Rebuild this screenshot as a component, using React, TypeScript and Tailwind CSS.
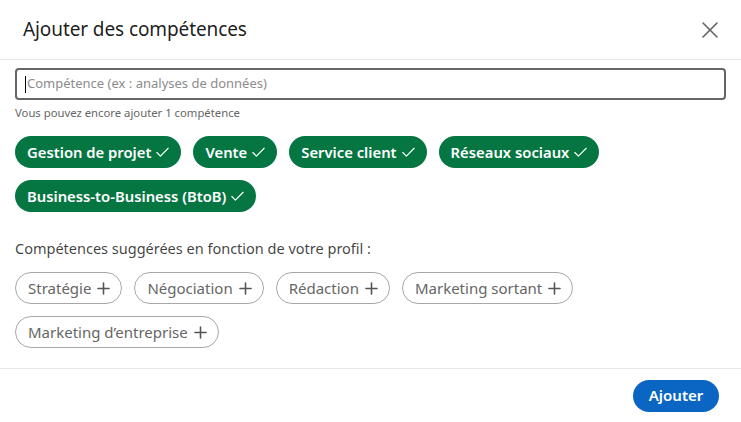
import { Check, Plus, X } from "lucide-react";

const added = [
  "Gestion de projet",
  "Vente",
  "Service client",
  "Réseaux sociaux",
  "Business-to-Business (BtoB)",
];

const suggested = [
  "Stratégie",
  "Négociation",
  "Rédaction",
  "Marketing sortant",
  "Marketing d’entreprise",
];

export default function App() {
  return (
    <div
      className="w-[741px] h-[422px] bg-white flex flex-col text-[rgba(0,0,0,0.9)]"
      style={{ fontFamily: '"Noto Sans", "Open Sans", sans-serif' }}
    >
      {/* en-tête */}
      <div className="h-[60px] flex items-center justify-between pl-[23px] pr-[17px] border-b border-[#e8e8e8] shrink-0">
        <h2 className="text-[19px] font-normal tracking-[-0.1px]">Ajouter des compétences</h2>
        <button className="w-[28px] h-[28px] flex items-center justify-center text-[#666]">
          <X className="w-[28px] h-[28px]" strokeWidth={1.4} />
        </button>
      </div>

      {/* contenu */}
      <div className="flex-1 px-[15px] pt-[8px]">
        <div className="h-[32px] w-[711px] border-2 border-[#666] rounded-[4px] flex items-center pl-[8px]">
          <span className="w-px h-[17px] bg-black mr-[1px]" />
          <span className="text-[13px] text-[#8c8c8c]">Compétence (ex : analyses de données)</span>
        </div>
        <p className="text-[11.3px] text-[#666] mt-[6px] leading-[14px]">
          Vous pouvez encore ajouter 1 compétence
        </p>

        <div className="flex flex-wrap gap-x-[12px] gap-y-[12px] mt-[16px] w-[620px]">
          {added.map((s) => (
            <span
              key={s}
              className="h-[32px] rounded-full bg-[#057642] text-white font-semibold text-[14.8px] flex items-center pl-[12px] pr-[10px] gap-[3px]"
            >
              {s}
              <Check className="w-[17px] h-[17px]" strokeWidth={1.6} />
            </span>
          ))}
        </div>

        <p className="text-[14.5px] text-[rgba(0,0,0,0.75)] mt-[26px] leading-[20px]">
          Compétences suggérées en fonction de votre profil :
        </p>

        <div className="flex flex-wrap gap-x-[12px] gap-y-[12px] mt-[14px] w-[600px]">
          {suggested.map((s) => (
            <span
              key={s}
              className="h-[32px] rounded-full border border-[#a8a8a8] text-[#666] text-[15px] flex items-center pl-[12px] pr-[8px] gap-[3px]"
            >
              {s}
              <Plus className="w-[19px] h-[19px] text-[#555]" strokeWidth={2} />
            </span>
          ))}
        </div>
      </div>

      {/* pied */}
      <div className="h-[54px] border-t border-[#e8e8e8] flex items-center justify-end pr-[22px] shrink-0">
        <button className="h-[32px] w-[86px] rounded-full bg-[#0a66c2] text-white font-semibold text-[15px]">
          Ajouter
        </button>
      </div>
    </div>
  );
}
